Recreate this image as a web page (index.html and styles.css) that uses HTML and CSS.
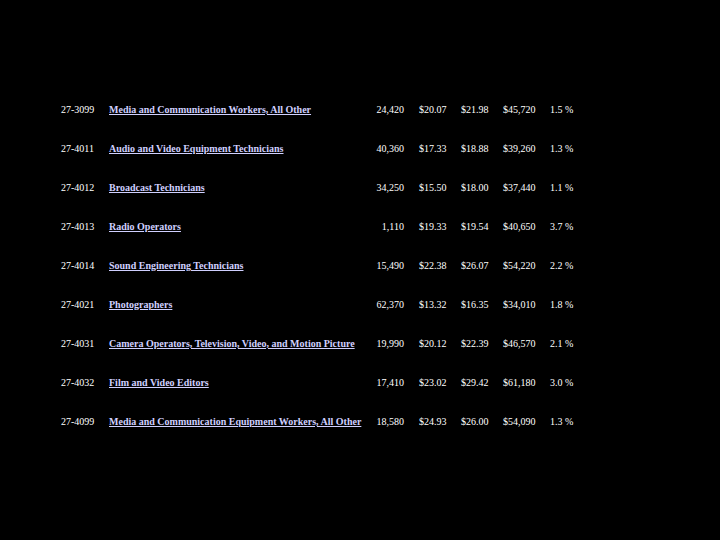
FILE: index.html
```html
<!DOCTYPE html>
<html>
<head>
<meta charset="utf-8">
<link rel="stylesheet" href="styles.css">
</head>
<body>
<div class="table">
  <div class="row"><span class="code">27-3099</span><a class="title" href="#">Media and Communication Workers, All Other</a><span class="num">24,420</span><span class="first">$20.07</span><span>$21.98</span><span>$45,720</span><span>1.5 %</span></div>
  <div class="row"><span class="code">27-4011</span><a class="title" href="#">Audio and Video Equipment Technicians</a><span class="num">40,360</span><span class="first">$17.33</span><span>$18.88</span><span>$39,260</span><span>1.3 %</span></div>
  <div class="row"><span class="code">27-4012</span><a class="title" href="#">Broadcast Technicians</a><span class="num">34,250</span><span class="first">$15.50</span><span>$18.00</span><span>$37,440</span><span>1.1 %</span></div>
  <div class="row"><span class="code">27-4013</span><a class="title" href="#">Radio Operators</a><span class="num">1,110</span><span class="first">$19.33</span><span>$19.54</span><span>$40,650</span><span>3.7 %</span></div>
  <div class="row"><span class="code">27-4014</span><a class="title" href="#">Sound Engineering Technicians</a><span class="num">15,490</span><span class="first">$22.38</span><span>$26.07</span><span>$54,220</span><span>2.2 %</span></div>
  <div class="row"><span class="code">27-4021</span><a class="title" href="#">Photographers</a><span class="num">62,370</span><span class="first">$13.32</span><span>$16.35</span><span>$34,010</span><span>1.8 %</span></div>
  <div class="row"><span class="code">27-4031</span><a class="title" href="#">Camera Operators, Television, Video, and Motion Picture</a><span class="num">19,990</span><span class="first">$20.12</span><span>$22.39</span><span>$46,570</span><span>2.1 %</span></div>
  <div class="row"><span class="code">27-4032</span><a class="title" href="#">Film and Video Editors</a><span class="num">17,410</span><span class="first">$23.02</span><span>$29.42</span><span>$61,180</span><span>3.0 %</span></div>
  <div class="row"><span class="code">27-4099</span><a class="title" href="#">Media and Communication Equipment Workers, All Other</a><span class="num">18,580</span><span class="first">$24.93</span><span>$26.00</span><span>$54,090</span><span>1.3 %</span></div>
</div>
</body>
</html>
```
FILE: styles.css
```css
html, body {
  margin: 0;
  padding: 0;
  background: #000;
  width: 720px;
  height: 540px;
  overflow: hidden;
}
body {
  font-family: "Liberation Serif", "Times New Roman", serif;
  font-size: 10px;
  color: #fff;
}
.table {
  padding-top: 90px;
  padding-left: 61px;
}
.row {
  display: grid;
  grid-template-columns: 48px 260px 35px 57px 42px 47px 40px;
  height: 39px;
  line-height: 39px;
  white-space: nowrap;
}
.first {
  padding-left: 15px;
}
.title {
  color: #d0d0ff;
  font-weight: bold;
  text-decoration: underline;
}
.num {
  text-align: right;
}
```
